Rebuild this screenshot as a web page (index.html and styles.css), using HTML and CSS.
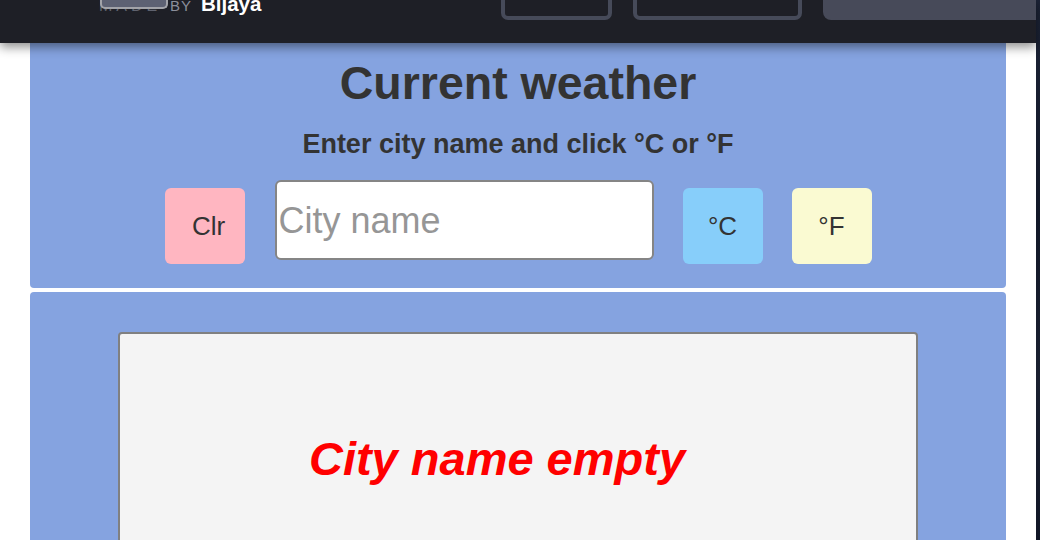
FILE: index.html
```html
<!DOCTYPE html>
<html lang="en">
<head>
<meta charset="utf-8">
<title>Current weather</title>
<link rel="stylesheet" href="styles.css">
</head>
<body>
<div class="shell">
  <div class="page">
    <header class="topbar">
      <div class="brand">
        <span class="made">MADE</span>
        <span class="chip"></span>
        <span class="by">BY</span>
        <b class="author">Bijaya</b>
      </div>
      <nav class="nav">
        <span class="nav-btn nav-btn-a"></span>
        <span class="nav-btn nav-btn-b"></span>
        <span class="nav-fill"></span>
      </nav>
    </header>
    <main class="content">
      <section class="panel panel-search">
        <h1 class="title">Current weather</h1>
        <p class="subtitle">Enter city name and click °C or °F</p>
        <div class="controls">
          <button class="btn btn-clear">Clr</button>
          <input class="city" type="text" placeholder="City name">
          <button class="btn btn-c">°C</button>
          <button class="btn btn-f">°F</button>
        </div>
      </section>
      <section class="panel panel-result">
        <div class="result">
          <p class="error">City name empty</p>
        </div>
      </section>
    </main>
  </div>
  <div class="rail"></div>
</div>
</body>
</html>
```

FILE: styles.css
```css
html, body {
  margin: 0;
  padding: 0;
  height: 100%;
  overflow: hidden;
}

body {
  background: #ffffff;
  font-family: "Liberation Sans", Arial, Helvetica, sans-serif;
  color: #333333;
}

.shell {
  display: flex;
  height: 540px;
}

.page {
  width: 1036px;
  display: flex;
  flex-direction: column;
}

.rail {
  width: 4px;
  background: linear-gradient(#1c2336, #121828 40%, #1a2030 70%, #111626);
}

/* top bar */
.topbar {
  position: relative;
  z-index: 2;
  height: 43px;
  flex: none;
  background: #1e1f26;
  box-shadow: 0 4px 10px rgba(0, 0, 0, 0.45);
  display: flex;
  align-items: flex-start;
  overflow: hidden;
}

.brand {
  position: relative;
  margin-left: 99px;
  margin-top: -6px;
  line-height: 20px;
  white-space: nowrap;
  display: flex;
  align-items: baseline;
}

.made {
  display: inline-block;
  width: 71px;
  font-size: 16px;
  color: #5f626e;
  letter-spacing: 4px;
}

.chip {
  position: absolute;
  left: 1px;
  top: -1px;
  width: 64px;
  height: 14px;
  background: #5d6173;
  border: 2px solid #a2a3a9;
  border-top: none;
  border-radius: 0 0 5px 5px;
}

.by {
  font-size: 15px;
  color: #8b8e9a;
  letter-spacing: 1px;
}

.author {
  font-size: 20.5px;
  font-weight: 700;
  color: #ffffff;
  margin-left: 9px;
}

.nav {
  display: flex;
  align-items: flex-start;
  margin-left: auto;
  gap: 22px;
  margin-top: -6px;
}

.nav-btn {
  display: block;
  height: 26px;
  box-sizing: border-box;
  border: 4px solid #464a59;
  border-radius: 7px;
}

.nav-btn-a { width: 111px; }
.nav-btn-b { width: 169px; margin-left: -1px; }

.nav-fill {
  display: block;
  width: 213px;
  height: 26px;
  background: #474a59;
  border-radius: 0 0 0 8px;
  margin-left: -1px;
}

/* content */
.content {
  padding: 0 30px;
  display: flex;
  flex-direction: column;
  gap: 4px;
}

.panel {
  background: #85a3e0;
  border-radius: 4px;
}

.panel-search {
  height: 245px;
  box-sizing: border-box;
  padding-top: 13px;
  border-radius: 0 0 4px 4px;
  text-align: center;
}

.title {
  margin: 0;
  font-size: 46.5px;
  line-height: 54px;
  font-weight: 700;
  color: #333333;
}

.subtitle {
  margin: 18px 0 0;
  font-size: 27px;
  line-height: 32px;
  font-weight: 700;
  color: #333333;
}

.controls {
  margin-top: 20px;
  display: flex;
  justify-content: center;
  align-items: flex-start;
  gap: 29px;
}

.btn {
  width: 80px;
  height: 76px;
  margin-top: 8px;
  border: none;
  border-radius: 6px;
  font-family: "Liberation Sans", Arial, Helvetica, sans-serif;
  font-size: 26px;
  color: #333333;
  padding: 0;
}

.btn-clear {
  background: #ffb6c1;
  padding-left: 8px;
}

.btn-c { background: #87cefa; }
.btn-f { background: #fafad2; }

.city {
  width: 379px;
  height: 80px;
  box-sizing: border-box;
  margin: 0 0 0 1px;
  border: 2px solid #858585;
  border-radius: 6px;
  background: #ffffff;
  padding: 2px 2px 0;
  font-family: "Liberation Sans", Arial, Helvetica, sans-serif;
  font-size: 36px;
  color: #333333;
  outline: none;
}

.city::placeholder {
  color: #969696;
}

.panel-result {
  height: 300px;
  padding-top: 40px;
  box-sizing: border-box;
  display: flex;
  justify-content: center;
}

.result {
  width: 800px;
  height: 300px;
  box-sizing: border-box;
  background: #f4f4f4;
  border: 2px solid #808080;
  border-radius: 4px;
  padding-top: 98px;
  padding-right: 42px;
  text-align: center;
}

.error {
  margin: 0;
  font-size: 47px;
  line-height: 54px;
  font-weight: 700;
  font-style: italic;
  color: #ff0000;
}
```
